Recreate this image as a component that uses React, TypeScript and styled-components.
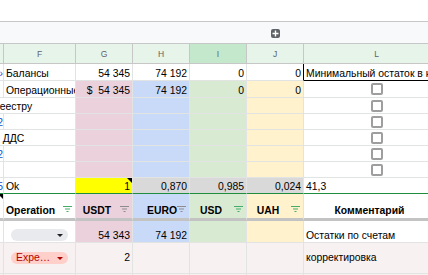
import styled, { createGlobalStyle } from 'styled-components'

const GlobalStyle = createGlobalStyle`
  html, body {
    margin: 0;
    padding: 0;
    background: #fff;
    overflow: hidden;
  }
`

const COLUMNS = '4px 72px 57px 57px 57px 57px 146px'

const tint = {
  usdt: '#ead1dc',
  euro: '#c9daf8',
  usd: '#d9ead3',
  uah: '#fff2cc',
  yellow: '#ffff00',
  grey: '#d9d9d9',
  band: '#f7f1f1',
}

const GRID = '#e2e3e3'
const HEAD_LINE = '#c7c7c7'

const Sheet = styled.div`
  width: 428px;
  height: 275px;
  overflow: hidden;
  background: #fff;
  font-family: 'Liberation Sans', Arial, sans-serif;
  font-size: 10.4px;
  color: #000;
`

const Toolbar = styled.div`
  height: 22px;
  box-sizing: border-box;
  border-bottom: 1px solid ${HEAD_LINE};
`

const GroupBar = styled.div`
  display: grid;
  grid-template-columns: ${COLUMNS};
  align-items: center;
  height: 22px;
  box-sizing: border-box;
  background: #f8f9fa;
  border-bottom: 1px solid ${HEAD_LINE};
`

const GroupToggle = styled.div`
  grid-column: 6;
  justify-self: center;
  margin-top: 2px;
  width: 9px;
  height: 9px;
  border-radius: 2px;
  background: #5f6368;
  display: flex;
  align-items: center;
  justify-content: center;
`

const LetterRow = styled.div`
  display: grid;
  grid-template-columns: ${COLUMNS};
  height: 20px;
  box-sizing: border-box;
  border-bottom: 1px solid ${HEAD_LINE};
`

const Letter = styled.div<{ $active?: boolean }>`
  display: flex;
  align-items: center;
  justify-content: center;
  background: ${(p) => (p.$active ? '#c4e8cc' : '#e6f4ea')};
  border-right: 1px solid ${HEAD_LINE};
  color: #5f6368;
  font-size: 8.5px;
`

const Row = styled.div<{ $h: number; $rule?: string; $bg?: string }>`
  --rule: ${(p) => p.$rule ?? `1px solid ${GRID}`};
  display: grid;
  grid-template-columns: ${COLUMNS};
  height: ${(p) => p.$h}px;
  background: ${(p) => p.$bg ?? '#fff'};
`

const flexOf = { start: 'flex-start', center: 'center', end: 'flex-end' }

type CellProps = {
  $bg?: string
  $align?: 'start' | 'center' | 'end'
  $v?: 'start' | 'center' | 'end'
  $right?: string
  $under?: string
  $span?: boolean
}

const Cell = styled.div<CellProps>`
  position: relative;
  grid-column: ${(p) => (p.$span ? '1 / 3' : 'auto')};
  display: flex;
  align-items: ${(p) => flexOf[p.$v ?? 'end']};
  justify-content: ${(p) => flexOf[p.$align ?? 'start']};
  min-width: 0;
  overflow: hidden;
  padding: 0 2px;
  box-sizing: border-box;
  background: ${(p) => p.$bg ?? 'transparent'};
  border-right: 1px solid ${(p) => p.$right ?? GRID};
  border-bottom: ${(p) => p.$under ?? 'var(--rule)'};
  white-space: pre;
  line-height: 12px;
`

const Gutter = styled(Cell)`
  padding: 0;
  justify-content: flex-end;
  color: #1155cc;
`

const Lead = styled.span<{ $shift: number }>`
  margin-left: ${(p) => p.$shift}px;
`

const Link = styled.span`
  color: #1155cc;
`

const NoteMark = styled.span`
  position: absolute;
  top: 0;
  right: 0;
  width: 0;
  height: 0;
  border-top: 5px solid #000;
  border-left: 5px solid transparent;
`

const Check = styled.span`
  width: 12px;
  height: 12px;
  box-sizing: border-box;
  border: 2px solid #9e9e9e;
  border-radius: 2px;
  background: #fff;
`

const HeadCell = styled(Cell)`
  font-weight: bold;
  padding-bottom: 1px;
`

const HeadText = styled.span<{ $align: 'start' | 'center' | 'end' }>`
  flex: 1;
  text-align: ${(p) => (p.$align === 'start' ? 'left' : p.$align === 'end' ? 'right' : 'center')};
  padding-right: ${(p) => (p.$align === 'center' ? 4 : 0)}px;
`

const FilterGlyph = styled.svg`
  flex: none;
  margin: 0 1px 5px 0;
`

const Chip = styled.div<{ $tone: 'muted' | 'expense'; $edge?: 'top' | 'bottom' }>`
  width: 57px;
  height: 12px;
  margin: ${(p) => (p.$edge === 'top' ? '1px 0 0 5px' : p.$edge === 'bottom' ? '0 0 1px 5px' : '0 0 0 5px')};
  padding: 0 5px;
  box-sizing: border-box;
  border-radius: 6px;
  display: flex;
  align-items: center;
  justify-content: space-between;
  background: ${(p) => (p.$tone === 'expense' ? '#ffcfc9' : '#e8eaed')};
  color: #b10202;
  line-height: 12px;
`

const ChipLabel = styled.span`
  max-width: 36px;
  overflow: hidden;
  text-overflow: ellipsis;
`

const Caret = styled.span<{ $color: string }>`
  flex: none;
  width: 0;
  height: 0;
  border-left: 3px solid transparent;
  border-right: 3px solid transparent;
  border-top: 3px solid ${(p) => p.$color};
`

const Filter = ({ color }: { color: string }) => (
  <FilterGlyph width="9" height="6" viewBox="0 0 9 6">
    <path d="M0 0.5h9M2 3h5M3.5 5.5h2" stroke={color} strokeWidth="1" fill="none" />
  </FilterGlyph>
)

const Plus = () => (
  <svg width="7" height="7" viewBox="0 0 7 7">
    <path d="M3.5 0.5v6M0.5 3.5h6" stroke="#fff" strokeWidth="1.4" />
  </svg>
)

const GREEN = '#45ad67'
const GREY = '#8d8d8d'

const columnTint = [tint.usdt, tint.euro, tint.usd, tint.uah]

const TintedBlank = () => (
  <>
    {columnTint.map((c) => (
      <Cell key={c} $bg={c} />
    ))}
  </>
)

export default function App() {
  const letters = ['', 'F', 'G', 'H', 'I', 'J', 'L']
  const okRule = '1px solid #1e8e3e'

  return (
    <>
      <GlobalStyle />
      <Sheet>
        <Toolbar />
        <GroupBar>
          <GroupToggle>
            <Plus />
          </GroupToggle>
        </GroupBar>
        <LetterRow>
          {letters.map((l, i) => (
            <Letter key={i} $active={l === 'I'}>
              {l}
            </Letter>
          ))}
        </LetterRow>

        <Row $h={17}>
          <Gutter>›</Gutter>
          <Cell>Балансы</Cell>
          <Cell $align="end">54 345</Cell>
          <Cell $align="end">74 192</Cell>
          <Cell $align="end">0</Cell>
          <Cell $align="end" $right="#000">0</Cell>
          <Cell $under="1px solid #000">Минимальный остаток в кассе</Cell>
        </Row>

        <Row $h={17}>
          <Gutter />
          <Cell>Операционные</Cell>
          <Cell $bg={tint.usdt} $align="end">{'$\u00a0\u00a054 345'}</Cell>
          <Cell $bg={tint.euro} $align="end">74 192</Cell>
          <Cell $bg={tint.usd} $align="end">0</Cell>
          <Cell $bg={tint.uah} $align="end">0</Cell>
          <Cell $align="center" $v="center"><Check /></Cell>
        </Row>

        <Row $h={16}>
          <Cell $span><Lead $shift={-8}>реестру</Lead></Cell>
          <TintedBlank />
          <Cell $align="center" $v="center"><Check /></Cell>
        </Row>

        <Row $h={16}>
          <Gutter>2</Gutter>
          <Cell />
          <TintedBlank />
          <Cell $align="center" $v="center"><Check /></Cell>
        </Row>

        <Row $h={16}>
          <Cell $span>
            <Lead $shift={-8}><Link>2</Link> ДДС</Lead>
          </Cell>
          <TintedBlank />
          <Cell $align="center" $v="center"><Check /></Cell>
        </Row>

        <Row $h={16}>
          <Gutter>2</Gutter>
          <Cell />
          <TintedBlank />
          <Cell $align="center" $v="center"><Check /></Cell>
        </Row>

        <Row $h={16}>
          <Gutter />
          <Cell />
          <TintedBlank />
          <Cell $align="center" $v="center"><Check /></Cell>
        </Row>

        <Row $h={16} $rule={okRule}>
          <Gutter>5</Gutter>
          <Cell>Ok</Cell>
          <Cell $bg={tint.yellow} $align="end">1<NoteMark /></Cell>
          <Cell $bg={tint.grey} $align="end">0,870</Cell>
          <Cell $bg={tint.grey} $align="end">0,985</Cell>
          <Cell $bg={tint.grey} $align="end">0,024</Cell>
          <Cell>41,3</Cell>
        </Row>

        <Row $h={27} $rule="3px solid #c3c3c3">
          <Gutter><NoteMark /></Gutter>
          <HeadCell>
            <HeadText $align="start">Operation</HeadText>
            <Filter color={GREEN} />
          </HeadCell>
          <HeadCell $bg={tint.usdt}>
            <HeadText $align="center">USDT</HeadText>
            <Filter color={GREY} />
          </HeadCell>
          <HeadCell $bg={tint.euro}>
            <HeadText $align="end">EURO</HeadText>
            <Filter color={GREY} />
          </HeadCell>
          <HeadCell $bg={tint.usd}>
            <HeadText $align="center">USD</HeadText>
            <Filter color={GREEN} />
          </HeadCell>
          <HeadCell $bg={tint.uah}>
            <HeadText $align="center">UAH</HeadText>
            <Filter color={GREEN} />
          </HeadCell>
          <HeadCell>
            <HeadText $align="center">Комментарий</HeadText>
            <Filter color={GREY} />
          </HeadCell>
        </Row>

        <Row $h={22}>
          <Gutter />
          <Cell>
            <Chip $tone="muted" $edge="bottom">
              <ChipLabel />
              <Caret $color="#202124" />
            </Chip>
          </Cell>
          <Cell $bg={tint.usdt} $align="end">54 343</Cell>
          <Cell $bg={tint.euro} $align="end">74 192</Cell>
          <Cell $bg={tint.usd} />
          <Cell $bg={tint.uah} />
          <Cell>Остатки по счетам</Cell>
        </Row>

        <Row $h={31} $bg={tint.band}>
          <Gutter />
          <Cell $v="center">
            <Chip $tone="expense">
              <ChipLabel>Expense</ChipLabel>
              <Caret $color="#b10202" />
            </Chip>
          </Cell>
          <Cell $v="center" $align="end">2</Cell>
          <Cell />
          <Cell />
          <Cell />
          <Cell $v="center">корректировка</Cell>
        </Row>

        <Row $h={31} $bg={tint.band}>
          <Gutter />
          <Cell $v="start">
            <Chip $tone="expense" $edge="top">
              <ChipLabel>Expense</ChipLabel>
              <Caret $color="#b10202" />
            </Chip>
          </Cell>
          <Cell />
          <Cell />
          <Cell />
          <Cell />
          <Cell />
        </Row>
      </Sheet>
    </>
  )
}
